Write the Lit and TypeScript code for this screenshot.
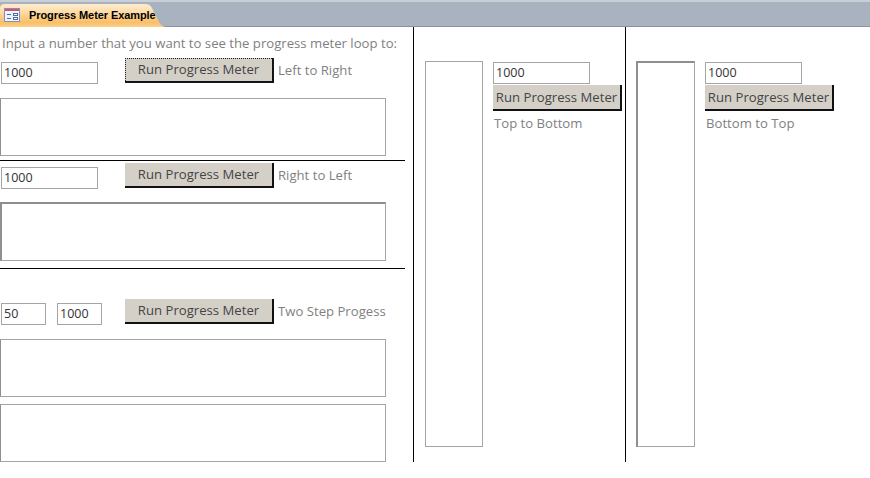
import { LitElement, html, css } from "lit";
import { customElement } from "lit/decorators.js";

@customElement("app-root")
export class AppRoot extends LitElement {
  static styles = css`
    :host { display: block; width: 870px; height: 478px; background: #fff; overflow: hidden;
      font-family: "Open Sans", "Noto Sans", sans-serif; font-size: 13.15px; color: #444; }
    * { box-sizing: border-box; }
    .tabbar { height: 27px; background: #a9b3c0; border-top: 2px solid #c9cfd7; border-bottom: 1px solid #8b95a2; display: flex; align-items: flex-end; }
    .tab { width: 166px; height: 23px; margin-bottom: -1px; display: flex; align-items: center; gap: 9px; padding: 0 0 1px 4px;
      background: linear-gradient(#fdeccf 0%, #fcdca8 35%, #f9bf68 80%, #fbd08a 100%);
      clip-path: path("M0 4 Q0 0 5 0 L145 0 Q150 0 152 4 L159 18 Q162 23 166 23 L0 23 Z"); }
    .tab svg { flex: none; display: block; }
    .tab b { font: bold 11px "Liberation Sans", Arial, sans-serif; color: #000; letter-spacing: -.08px; }
    .main { display: flex; height: 435px; }
    .left { width: 414px; flex: none; border-right: 1px solid #000; }
    .mid { width: 212px; flex: none; border-right: 1px solid #000; padding: 34px 0 0 11px; display: flex; }
    .right { flex: 1; padding: 34px 0 0 10px; display: flex; }
    .hint { color: #7f7f7f; padding: 7px 0 0 2px; height: 31px; line-height: 18px; }
    .row { display: flex; align-items: flex-start; height: 40px; }
    .row .inp { margin: 4px 0 0 1px; }
    .input { width: 97px; height: 22px; border: 1px solid #a5a5a5; background: #fff; padding: 0 0 0 2px; line-height: 20px; color: #333; font-size: 12.5px; }
    .input.short { width: 45px; margin-right: 11px; }
    .btn { width: 149px; height: 25px; background: #d4d0c8; border: 0; border-right: 2px solid #111; border-bottom: 2px solid #111;
      color: #444; text-align: center; line-height: 22px; }
    .btn.focus { outline: 1px dotted #222; outline-offset: -1px; }
    .row .btn { margin-left: 27px; }
    .row .cap { margin: 3px 0 0 4px; line-height: 18px; color: #7f7f7f; }
    .bar { width: 386px; height: 58px; border: 1px solid #a5a5a5; border-left-color: #8f8f8f; background: #fff; }
    .bar.heavy { border-top: 2px solid #8f8f8f; border-left: 2px solid #8f8f8f; height: 59px; }
    hr { width: 405px; height: 1px; margin: 0; border: 0; background: #000; }
    .vbar { width: 58px; height: 386px; border: 1px solid #a5a5a5; flex: none; }
    .vbar.heavy { width: 59px; border-top: 2px solid #8f8f8f; border-left: 2px solid #8f8f8f; }
    .side { display: flex; flex-direction: column; align-items: flex-start; margin-left: 10px; padding-top: 1px; }
    .side .btn { width: 129px; height: 26px; margin-top: 1px; line-height: 25px; }
    .side .cap { color: #7f7f7f; margin: 3px 0 0 1px; line-height: 18px; }
    .gap4 { margin-top: 4px; }
    .gap7 { margin-top: 7px; }
    .r2 { margin-top: 2px; height: 39px; }
    .r3 { margin-top: 30px; height: 40px; }
    .row .input.second { margin-left: 0; margin-right: 0; }
    .row .btn.after { margin-left: 23px; }
  `;

  render() {
    return html`
      <div class="tabbar">
        <div class="tab">
          <svg width="16" height="14" viewBox="0 0 16 14">
            <rect x=".5" y=".5" width="15" height="13" fill="#f1f3fb" stroke="#8a8fb8"/>
            <rect x="1" y="1" width="14" height="2" fill="#c9566a"/>
            <path d="M3 6.5h4M3 10.5h4" stroke="#4a6aa8" fill="none"/>
            <rect x="9.5" y="5.5" width="4" height="2" fill="#fff" stroke="#4a6aa8"/>
            <rect x="9.5" y="9.5" width="4" height="2" fill="#fff" stroke="#4a6aa8"/>
          </svg>
          <b>Progress Meter Example</b>
        </div>
      </div>
      <div class="main">
        <div class="left">
          <div class="hint">Input a number that you want to see the progress meter loop to:</div>
          <div class="row">
            <div class="input inp">1000</div>
            <div class="btn focus">Run Progress Meter</div>
            <div class="cap">Left to Right</div>
          </div>
          <div class="bar"></div>
          <hr class="gap4" />
          <div class="row r2">
            <div class="input inp">1000</div>
            <div class="btn">Run Progress Meter</div>
            <div class="cap">Right to Left</div>
          </div>
          <div class="bar heavy"></div>
          <hr class="gap7" />
          <div class="row r3">
            <div class="input inp short">50</div>
            <div class="input inp short second">1000</div>
            <div class="btn after">Run Progress Meter</div>
            <div class="cap">Two Step Progess</div>
          </div>
          <div class="bar"></div>
          <div class="bar gap7"></div>
        </div>
        <div class="mid">
          <div class="vbar"></div>
          <div class="side">
            <div class="input">1000</div>
            <div class="btn">Run Progress Meter</div>
            <div class="cap">Top to Bottom</div>
          </div>
        </div>
        <div class="right">
          <div class="vbar heavy"></div>
          <div class="side">
            <div class="input">1000</div>
            <div class="btn">Run Progress Meter</div>
            <div class="cap">Bottom to Top</div>
          </div>
        </div>
      </div>
    `;
  }
}
